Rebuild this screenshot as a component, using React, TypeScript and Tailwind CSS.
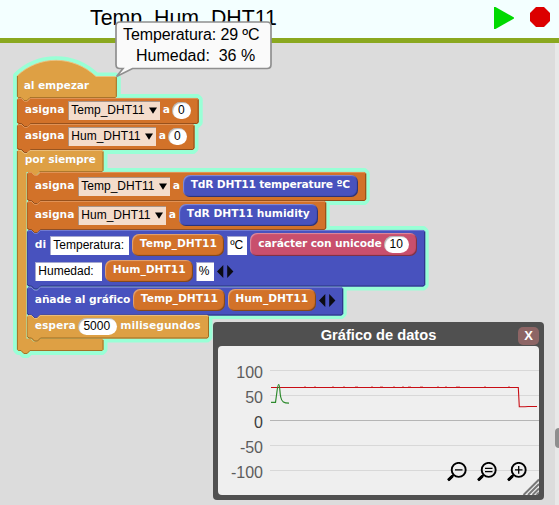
import type { ReactNode } from "react";

type Tone = { fill: string; light: string; dark: string };

const ORANGE: Tone = { fill: "#d27229", light: "#e39a62", dark: "#8f4a16" };
const GOLD: Tone = { fill: "#dea044", light: "#ecc285", dark: "#9c6c23" };
const BLUE: Tone = { fill: "#4852be", light: "#7c84d6", dark: "#2b3280" };

const topEdge = (x: number, y: number, w: number) =>
  `M${x} ${y + 1.5} L${x + 1.5} ${y} H${x + 4} l3 3 h3 l3 -3 H${x + w - 1.5} L${x + w} ${y + 1.5}`;
const bottomEdge = (x: number, y: number, w: number, h: number) =>
  ` V${y + h - 1.5} L${x + w - 1.5} ${y + h} H${x + 13} l-3 3 h-3 l-3 -3 H${x + 1.5} L${x} ${y + h - 1.5}`;
const blockPath = (x: number, y: number, w: number, h: number) =>
  topEdge(x, y, w) + bottomEdge(x, y, w, h) + "Z";

const HAT =
  "M0 16 C22 -5 56 -5 79 16.5 H98.3 L99.8 18 V36.5 L98.3 38 H13 l-3 3 h-3 l-3 -3 H1.5 L0 36.5 Z";
const LOOP =
  "M0 1.5 L1.5 0 H4 l3 3 h3 l3 -3 H85 L86.5 1.5 V20.5 L85 22 H22.5 l-3 3 h-3 l-3 -3 H9.5 V188.5 H13.5 l3 3 h3 l3 -3 H85 L86.5 190 V199.5 L85 201 H13 l-3 3 h-3 l-3 -3 H1.5 L0 199.5 Z";

function Block({ w, h, tone, children }: { w: number; h: number; tone: Tone; children: ReactNode }) {
  return (
    <div className="relative" style={{ width: w, height: h }}>
      <svg className="absolute inset-0 overflow-visible" width={w} height={h} fill="none">
        <path d={blockPath(0, 0, w, h)} fill={tone.fill} />
        <path d={topEdge(0.4, 0.4, w - 0.8)} stroke={tone.light} strokeWidth="0.9" />
        <path
          d={`M${w - 0.5} 1.5` + bottomEdge(0.5, 0, w - 1, h - 0.5)}
          stroke={tone.dark}
          strokeWidth="1"
        />
        <path d={`M0.4 1.5V${h - 1.5}`} stroke={tone.dark} strokeWidth="0.8" opacity="0.6" />
      </svg>
      <div className="relative">{children}</div>
    </div>
  );
}

const LABEL =
  "block shrink-0 whitespace-pre font-['DejaVu_Sans',sans-serif] text-[10.67px] font-bold leading-[14px] text-white [text-shadow:-0.5px_-0.5px_0_rgba(0,0,0,0.2)]";

const Label = ({ className = "", children }: { className?: string; children: ReactNode }) => (
  <span className={`${LABEL} ${className}`}>{children}</span>
);

const Menu = ({ className = "", name }: { className?: string; name: string }) => (
  <div
    className={`flex h-[18.5px] shrink-0 items-center justify-between border-l border-t border-[#a9968a] bg-[#f4dccb] pl-[2px] pr-[3px] text-[12px] leading-[17px] text-black ${className}`}
  >
    {name}
    <svg width="8" height="7" viewBox="0 0 8 7">
      <path d="M0 0.5H8L4 6.8Z" />
    </svg>
  </div>
);

const Oval = ({ className = "", children }: { className?: string; children: ReactNode }) => (
  <div
    className={`shrink-0 rounded-full bg-white pr-[1px] text-center text-[12px] leading-[17px] text-black shadow-[inset_1px_1px_1px_rgba(0,0,0,0.3)] h-[17px] ${className}`}
  >
    {children}
  </div>
);

const Field = ({ className = "", children }: { className?: string; children: ReactNode }) => (
  <div
    className={`h-[18.5px] shrink-0 whitespace-pre border-l border-t border-[#a5a8cf] bg-white pl-[2px] text-[12px] leading-[17px] text-black ${className}`}
  >
    {children}
  </div>
);

const Reporter = ({ className = "", children }: { className?: string; children: ReactNode }) => (
  <div
    className={`flex shrink-0 rounded-[7px] pt-[3px] shadow-[inset_-1px_-1px_1px_rgba(0,0,0,0.4),inset_1px_1px_1px_rgba(255,255,255,0.35)] ${className}`}
  >
    {children}
  </div>
);

const Arrows = ({ className = "" }: { className?: string }) => (
  <svg className={`shrink-0 ${className}`} width="17" height="13" viewBox="0 0 17 13" fill="#0b0b14">
    <path d="M6.3 0V13L0 6.5ZM10.2 0V13L16.4 6.5Z" />
  </svg>
);

function Script() {
  return (
    <div className="absolute left-[17.3px] top-[60px]">
      <svg className="absolute left-0 top-0 overflow-visible" width="1" height="1">
        <g fill="#99ffd6" stroke="#99ffd6" strokeWidth="8" strokeLinejoin="round">
          <path d={HAT} />
          <path d={blockPath(0, 38, 181.7, 26)} />
          <path d={blockPath(0, 64, 177.5, 26)} />
          <path d={LOOP} transform="translate(0 90)" />
          <path d={blockPath(9.5, 112, 339.2, 29)} />
          <path d={blockPath(9.5, 141, 299.2, 29)} />
          <path d={blockPath(9.5, 170, 398.2, 56.5)} />
          <path d={blockPath(9.5, 226.5, 316.2, 28.5)} />
          <path d={blockPath(9.5, 255, 182, 23.5)} />
        </g>
      </svg>
      <div className="relative h-[38px] w-[100px]">
        <svg className="absolute inset-0 overflow-visible" width="100" height="38">
          <path d={HAT} fill={GOLD.fill} />
          <path d="M0 16 C22 -5 56 -5 79 16.5 H98.3" fill="none" stroke={GOLD.light} strokeWidth="0.9" />
          <path
            d="M99.3 17V36.5L98.3 37.5H13l-3 3h-3l-3 -3H1.5L0.4 36.5V16"
            fill="none"
            stroke={GOLD.dark}
            strokeWidth="0.9"
          />
        </svg>
        <Label className="relative pl-[6.5px] pt-[19px] tracking-[-0.12px]">al empezar</Label>
      </div>
      <Block w={181.7} h={26} tone={ORANGE}>
        <div className="flex pl-[7.5px] pt-[3px]">
          <Label className="mt-[2px] w-[43.5px]">asigna</Label>
          <Menu className="w-[92px]" name="Temp_DHT11" />
          <Label className="ml-[2.5px] mt-[2px] w-[9.7px]">a</Label>
          <Oval className="mt-[1px] w-[18.5px]">0</Oval>
        </div>
      </Block>
      <Block w={177.5} h={26} tone={ORANGE}>
        <div className="flex pl-[7.5px] pt-[3px]">
          <Label className="mt-[2px] w-[43.5px]">asigna</Label>
          <Menu className="w-[88px]" name="Hum_DHT11" />
          <Label className="ml-[2.5px] mt-[2px] w-[9.7px]">a</Label>
          <Oval className="mt-[1px] w-[18.5px]">0</Oval>
        </div>
      </Block>
      <div className="relative h-[201px]">
        <svg className="absolute inset-0 overflow-visible" width="87" height="201">
          <path d={LOOP} fill={GOLD.fill} />
          <path d={topEdge(0, 0.4, 86)} fill="none" stroke={GOLD.light} strokeWidth="0.9" />
          <path
            d="M86 1.5V20.5L85 21.6H22.5M86 190V199.5L85 200.5H13l-3 3h-3l-3 -3H1.5L0.4 199.5V1"
            fill="none"
            stroke={GOLD.dark}
            strokeWidth="0.9"
          />
        </svg>
        <div className="relative h-[22px] pl-[7.5px] pt-[3px]">
          <Label className="tracking-[-0.13px]">por siempre</Label>
        </div>
        <div className="relative pl-[9.5px]">
          <Block w={339.2} h={29} tone={ORANGE}>
            <div className="flex pl-[8px] pt-[3px]">
              <Label className="mt-[4px] w-[43.5px]">asigna</Label>
              <Menu className="mt-[2px] w-[92px]" name="Temp_DHT11" />
              <Label className="ml-[2.5px] mt-[4px] w-[10.5px]">a</Label>
              <Reporter className="h-[22px] w-[174.5px] bg-[#4852be] pl-[7.5px]">
                <Label className="tracking-[-0.2px]">TdR DHT11 temperature ºC</Label>
              </Reporter>
            </div>
          </Block>
          <Block w={299.2} h={29} tone={ORANGE}>
            <div className="flex pl-[8px] pt-[3px]">
              <Label className="mt-[4px] w-[43.5px]">asigna</Label>
              <Menu className="mt-[2px] w-[88px]" name="Hum_DHT11" />
              <Label className="ml-[2.5px] mt-[4px] w-[10.5px]">a</Label>
              <Reporter className="h-[22px] w-[138.5px] bg-[#4852be] pl-[7.5px]">
                <Label className="tracking-[-0.04px]">TdR DHT11 humidity</Label>
              </Reporter>
            </div>
          </Block>
          <Block w={398.2} h={56.5} tone={BLUE}>
            <div className="flex h-[27px] pl-[8px] pt-[3px]">
              <Label className="mt-[5px] w-[15.5px]">di</Label>
              <Field className="mt-[3px] w-[79px]">Temperatura:</Field>
              <Reporter className="ml-[3px] mt-[1px] h-[22px] w-[91.5px] bg-[#d27229] pl-[7.5px]">
                <Label>Temp_DHT11</Label>
              </Reporter>
              <Field className="ml-[3.5px] mt-[3px] w-[19.5px] tracking-[-0.3px]">ºC</Field>
              <Reporter className="ml-[3.5px] h-[23px] w-[167px] bg-[#c94f6d] pl-[8px]">
                <Label className="mt-[1px] w-[126px] tracking-[-0.13px]">carácter con unicode</Label>
                <Oval className="w-[25px]">10</Oval>
              </Reporter>
            </div>
            <div className="flex pl-[8.5px] pt-[3px]">
              <Field className="mt-[2px] w-[66.5px]">Humedad: </Field>
              <Reporter className="ml-[3.5px] h-[22px] w-[87.5px] bg-[#d27229] pl-[7.5px]">
                <Label>Hum_DHT11</Label>
              </Reporter>
              <Field className="ml-[3px] mt-[2px] w-[18px]">%</Field>
              <Arrows className="ml-[3.5px] mt-[5px]" />
            </div>
          </Block>
          <Block w={316.2} h={28.5} tone={BLUE}>
            <div className="flex pl-[8px] pt-[2.5px]">
              <Label className="mt-[4px] w-[98.5px] tracking-[-0.1px]">añade al gráfico</Label>
              <Reporter className="h-[22px] w-[91.5px] bg-[#d27229] pl-[7.5px]">
                <Label>Temp_DHT11</Label>
              </Reporter>
              <Reporter className="ml-[3px] h-[22px] w-[88px] bg-[#d27229] pl-[7.5px]">
                <Label>Hum_DHT11</Label>
              </Reporter>
              <Arrows className="ml-[3px] mt-[5px]" />
            </div>
          </Block>
          <Block w={182} h={23.5} tone={GOLD}>
            <div className="flex pl-[8px] pt-[3px]">
              <Label className="mt-[1px] w-[43px]">espera</Label>
              <Oval className="w-[39px]">5000</Oval>
              <Label className="ml-[3.5px] mt-[1px] tracking-[0.06px]">milisegundos</Label>
            </div>
          </Block>
        </div>
      </div>
    </div>
  );
}

const Zoom = ({ sign }: { sign: string }) => (
  <svg width="20" height="20" viewBox="0 0 20 20" fill="none" stroke="#000">
    <circle cx="11.7" cy="7.9" r="7" strokeWidth="1.9" />
    <path d="M6.5 13L1 18.3" strokeWidth="2.4" />
    <path d="M5.5 14L1.5 18" strokeWidth="3" />
    <path d={sign} strokeWidth="1.3" />
  </svg>
);

const TICKS = ["100", "50", "0", "-50", "-100"];

function Chart() {
  return (
    <div className="absolute left-[213px] top-[322px] flex h-[178px] w-[331px] flex-col rounded-[4px] bg-[#505050] px-[5px] pb-[5px]">
      <div className="relative h-[24px] shrink-0 text-center text-[14.67px] font-bold leading-[27px] text-white">
        Gráfico de datos
        <div className="absolute right-0 top-[5px] h-[18px] w-[21px] rounded-[5px] bg-[#8d6565] text-center text-[13px] leading-[18px]">
          X
        </div>
      </div>
      <div className="relative flex-1 overflow-hidden rounded-[4px] bg-[#efefef]">
        <div className="w-[45px] pt-[14px] text-right text-[16px] leading-[25px] text-[#5c5c5c]">
          {TICKS.map((t) => (
            <div key={t} className={t === "0" ? "text-[#3c3c3c]" : ""}>
              {t}
            </div>
          ))}
        </div>
        <svg className="absolute inset-0" width="321" height="149" fill="none">
          <path d="M52 24.5H321M52 49.5H321M52 99.5H321M52 124.5H321" stroke="#d8d8d8" />
          <path d="M52 74.5H321" stroke="#b5b5b5" />
          <path
            d="M86 40.5h2M96 40.5h2M114 40.5h2M125 40.5h2M137 40.5h3M153 40.5h2M162 40.5h3M175 40.5h2M184 40.5h2M190 40.5h3M202 40.5h3M219 40.5h2M227 40.5h2M238 40.5h4M266 40.5h2M290 40.5h2"
            stroke="#e0a0a0"
          />
          <path d="M53 41.5H300.3L301.3 60.7H307L310 60.5H319" stroke="#c80d14" strokeWidth="1.1" />
          <path
            d="M53 56.3H57.5C59.5 43 59.5 38.5 60.6 38.5C62 38.5 61.5 45 62.7 51C63.7 56 66 57.2 71 57.2"
            stroke="#2d8a2d"
            strokeWidth="1.2"
          />
          <path d="M305.5 149L321 133.5M310 149L321 138M314.5 149L321 142.5M318.5 149L321 146.5" stroke="#777" strokeWidth="2" />
        </svg>
        <div className="absolute bottom-[13px] right-[12px] flex gap-[10px]">
          <Zoom sign="M8 7.9H15.5" />
          <Zoom sign="M8 6.3H15.5M8 9.6H15.5" />
          <Zoom sign="M8 7.9H15.5M11.7 4.1V11.7" />
        </div>
      </div>
    </div>
  );
}

export default function App() {
  return (
    <div className="relative flex h-[505px] w-[559px] flex-col overflow-hidden bg-[#dcdcdc] font-['Liberation_Sans',Arial,sans-serif]">
      <header className="flex h-[43px] shrink-0 justify-between border-b-[5px] border-[#8aa81f] bg-[#f3ffff] pl-[90px] pr-[9px]">
        <h1 className="text-[21.33px] leading-[36px] text-black">Temp_Hum_DHT11</h1>
        <div className="flex gap-[16px] pt-[7px]">
          <svg width="20" height="22" viewBox="0 0 20 22">
            <path d="M0 0H1.5L20 10.5V11.5L1.5 22H0Z" fill="#00d900" />
          </svg>
          <svg width="20" height="20" viewBox="0 0 20 20">
            <path d="M6 0H14L20 6V14L14 20H6L0 14V6Z" fill="#dc0000" />
          </svg>
        </div>
      </header>
      <main className="flex flex-1 justify-end">
        <div className="w-[4px] bg-[#e8e8e8] pt-[385px]">
          <div className="h-[20px] rounded-l-[4px] bg-[#8e8e8e]" />
        </div>
      </main>
      <Script />
      <Chart />
      <div className="absolute left-[115px] top-[21px] h-[57px] w-[157px]">
        <svg className="absolute inset-0" width="157" height="57">
          <path
            d="M5 1H152Q156 1 156 5V43.5Q156 47.5 152 47.5H17.5L1.5 55.5L8 47.5H5Q1 47.5 1 43.5V5Q1 1 5 1Z"
            fill="#fafafa"
            stroke="#8f8f8f"
            strokeWidth="1.7"
          />
        </svg>
        <div className="relative whitespace-pre pt-[3px] text-[16px] leading-[21px] text-black">
          <div className="pl-[8px] tracking-[-0.1px]">Temperatura: 29 ºC</div>
          <div className="pl-[21px]">{"Humedad:  36 %"}</div>
        </div>
      </div>
    </div>
  );
}
